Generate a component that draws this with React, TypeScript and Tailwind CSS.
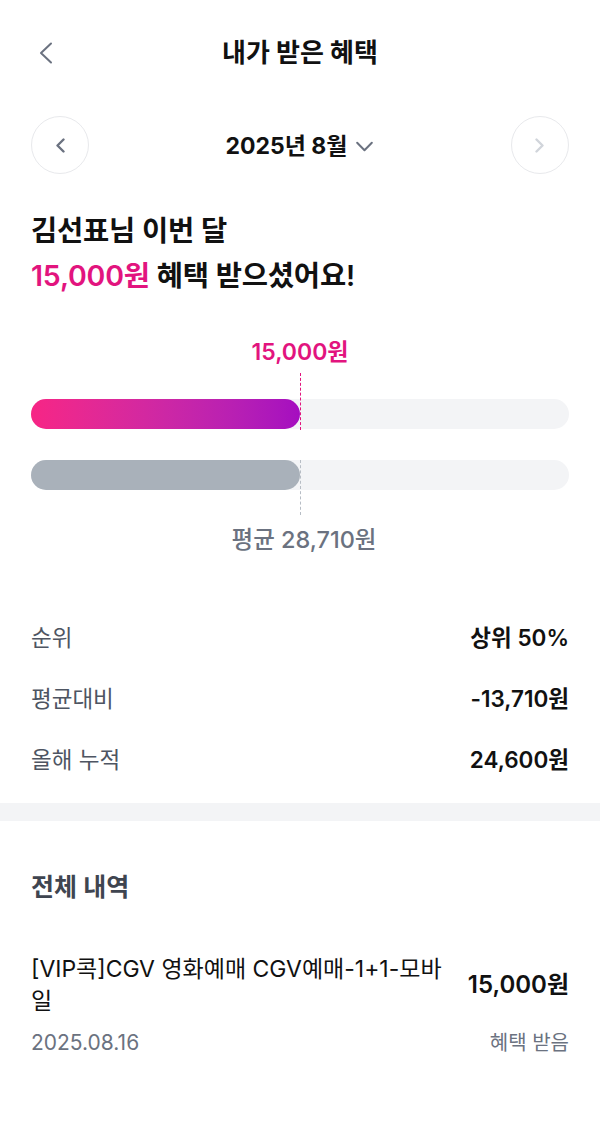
import React from 'react';

const font = { fontFamily: "Inter, 'Noto Sans CJK KR', 'Noto Sans', sans-serif" };

const stats = [
  { label: '순위', value: '상위 50%' },
  { label: '평균대비', value: '-13,710원' },
  { label: '올해 누적', value: '24,600원' },
];

export default function App() {
  const mine = 50;
  const avg = 50;

  return (
    <div className="min-h-screen bg-white text-[#111111]" style={font}>
      {/* Header */}
      <div className="relative flex h-[104px] items-center justify-center">
        <button className="absolute left-[39px] top-[42px] text-[#6B7280]">
          <svg viewBox="0 0 14 22" className="h-[22px] w-[14px]" fill="none" stroke="currentColor" strokeWidth={2} strokeLinecap="round" strokeLinejoin="round">
            <polyline points="12 1.5 2 11 12 20.5" />
          </svg>
        </button>
        <h1 className="text-[26px] font-bold">내가 받은 혜택</h1>
      </div>

      {/* Month nav */}
      <div className="mt-[12px] flex items-center justify-between px-[31px]">
        <button className="flex h-[58px] w-[58px] items-center justify-center rounded-full border-[1.5px] border-[#E8E9EC] text-[#6B7280]">
          <svg viewBox="0 0 11 15" className="h-[15px] w-[11px]" fill="none" stroke="currentColor" strokeWidth={2.4} strokeLinecap="round" strokeLinejoin="round">
            <polyline points="8.5 1.5 2.5 7.5 8.5 13.5" />
          </svg>
        </button>
        <div className="flex items-center gap-[8px] pt-[3px]">
          <span className="text-[23px] font-bold">2025년 8월</span>
          <svg viewBox="0 0 20 12" className="h-[11px] w-[19px] text-[#6B7280]" fill="none" stroke="currentColor" strokeWidth={2.2} strokeLinecap="round" strokeLinejoin="round">
            <polyline points="2 2 10 10 18 2" />
          </svg>
        </div>
        <button className="flex h-[58px] w-[58px] items-center justify-center rounded-full border-[1.5px] border-[#E8E9EC] text-[#D1D5DB]">
          <svg viewBox="0 0 11 15" className="h-[15px] w-[11px]" fill="none" stroke="currentColor" strokeWidth={2.4} strokeLinecap="round" strokeLinejoin="round">
            <polyline points="2.5 1.5 8.5 7.5 2.5 13.5" />
          </svg>
        </button>
      </div>

      {/* Headline */}
      <div className="mt-[34px] px-[31px] text-[28.5px] font-semibold leading-[45px] tracking-[-0.2px]">
        <p>김선표님 이번 달</p>
        <p>
          <span className="text-[#E2147E]">15,000원</span> 혜택 받으셨어요!
        </p>
      </div>

      {/* Chart */}
      <div className="mt-[40px] px-[31px]">
        <div className="relative">
          <div className="flex justify-center">
            <span className="text-[23px] font-semibold leading-[28px] text-[#E2147E]">15,000원</span>
          </div>
          <div className="mt-[33px] h-[30px] rounded-full bg-[#F3F4F6]">
            <div
              className="h-full rounded-full bg-gradient-to-r from-[#F72585] to-[#A50DC0]"
              style={{ width: `${mine}%` }}
            />
          </div>
          <div className="mt-[31px] h-[30px] rounded-full bg-[#F3F4F6]">
            <div className="h-full rounded-full bg-[#A9B1BA]" style={{ width: `${avg}%` }} />
          </div>
          <div className="mt-[36px] flex justify-center pl-[8px]">
            <span className="text-[23.5px] font-medium leading-[28px] text-[#6B7280]">평균 28,710원</span>
          </div>

          {/* marker lines */}
          <div className="absolute left-1/2 top-[35px] h-[57px] border-l-[1.5px] border-dashed border-[#E2147E]" />
          <div className="absolute left-1/2 top-[122px] h-[55px] border-l-[1.5px] border-dashed border-[#B7BDC5]" />
        </div>
      </div>

      {/* Stats */}
      <div className="mt-[70px] flex flex-col gap-[33px] px-[31px] pb-[29px]">
        {stats.map((s) => (
          <div key={s.label} className="flex items-center justify-between leading-[28px]">
            <span className="text-[22.5px] text-[#4E5562]">{s.label}</span>
            <span className="text-[22.5px] font-semibold text-[#111111]">{s.value}</span>
          </div>
        ))}
      </div>

      <div className="h-[18px] bg-[#F3F4F6]" />

      {/* History */}
      <div className="px-[31px] pt-[50px]">
        <h2 className="text-[25px] font-semibold leading-[32px] text-[#3F4550]">전체 내역</h2>
        <div className="mt-[50px]">
          <div className="flex items-center justify-between gap-[18px]">
            <p className="flex-1 text-[23px] leading-[32px] text-[#111111]">
              [VIP콕]CGV 영화예매 CGV예매-1+1-모바일
            </p>
            <span className="text-[24px] font-semibold text-[#111111]">15,000원</span>
          </div>
          <div className="mt-[12px] flex items-center justify-between leading-[28px]">
            <span className="text-[21px] text-[#6B7280]">2025.08.16</span>
            <span className="text-[20px] text-[#6B7280]">혜택 받음</span>
          </div>
        </div>
      </div>
    </div>
  );
}
